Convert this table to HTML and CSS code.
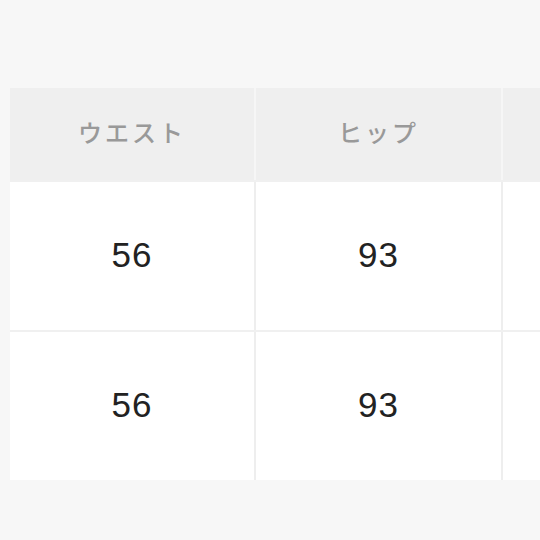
FILE: index.html
```html
<!DOCTYPE html>
<html lang="ja">
<head>
<meta charset="utf-8">
<link rel="stylesheet" href="styles.css">
</head>
<body>
<div class="page">
  <div class="table">
    <div class="row head-row">
      <div class="cell head">ウエスト</div>
      <div class="cell head">ヒップ</div>
      <div class="cell head"></div>
    </div>
    <div class="row">
      <div class="cell">56</div>
      <div class="cell">93</div>
      <div class="cell"></div>
    </div>
    <div class="row">
      <div class="cell">56</div>
      <div class="cell">93</div>
      <div class="cell"></div>
    </div>
  </div>
</div>
</body>
</html>
```
FILE: styles.css
```css
html, body {
  margin: 0;
  padding: 0;
  background: #f7f7f7;
}
.page {
  width: 540px;
  height: 540px;
  overflow: hidden;
  padding: 88px 0 0 10px;
  box-sizing: border-box;
}
.table {
  display: flex;
  flex-direction: column;
  gap: 2px;
  background: #f0f0f0;
  width: 740px;
}
.row {
  display: grid;
  grid-template-columns: 244px 245px 245px;
  grid-auto-rows: 148px;
  gap: 2px;
  background: #eeeeee;
}
.head-row {
  grid-auto-rows: 92px;
  background: #f6f6f6;
}
.cell {
  background: #ffffff;
  display: flex;
  align-items: center;
  justify-content: center;
  padding-bottom: 3px;
  box-sizing: border-box;
  font-family: "Liberation Sans", Arial, sans-serif;
  font-size: 35px;
  letter-spacing: 1px;
  color: #222222;
}
.head {
  background: #efefef;
  padding-bottom: 6px;
  font-family: "Noto Sans CJK JP", "Noto Sans", sans-serif;
  font-size: 24px;
  font-weight: 500;
  letter-spacing: 3px;
  color: #999999;
}
```
